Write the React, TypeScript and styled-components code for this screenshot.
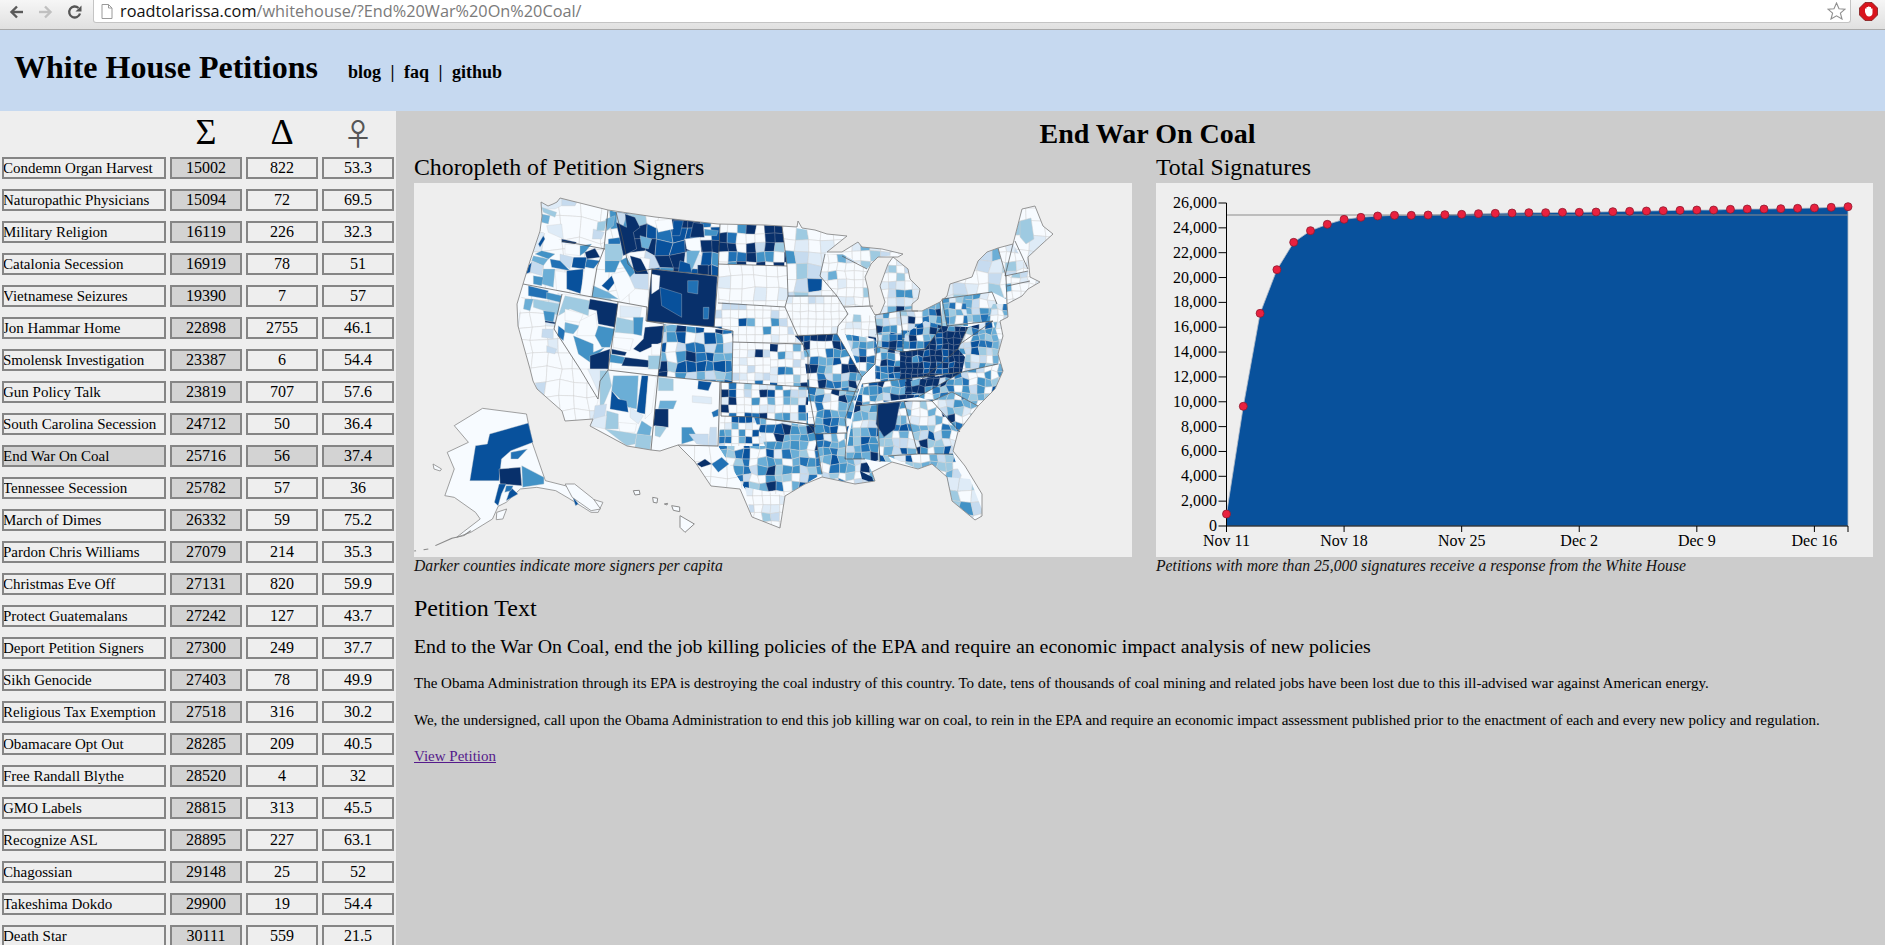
import React from "react";
import styled, { createGlobalStyle } from "styled-components";

const SERIF = `"Liberation Serif", "Times New Roman", serif`;

const Global = createGlobalStyle`
  html, body { margin: 0; padding: 0; height: 100%; overflow: hidden; background: #ccc; }
  body { font-family: ${SERIF}; color: #000; }
`;

const Page = styled.div`
  width: 1885px; height: 945px; overflow: hidden;
  display: flex; flex-direction: column;
`;

/* ---------- browser chrome ---------- */
const Chrome = styled.div`
  height: 29px; flex: none; display: flex; align-items: flex-start;
  background: linear-gradient(#f6f6f6, #e0e0e0);
  border-bottom: 1px solid #a9a9a9;
`;
const NavIcons = styled.div`
  width: 93px; height: 24px; flex: none; display: flex; align-items: center;
  gap: 14px; padding-left: 9px; box-sizing: border-box;
`;
const AddressBox = styled.div`
  width: 1758px; height: 23px; flex: none; box-sizing: border-box;
  background: #fff; border: 1px solid #c4c4c4; border-top: 0;
  border-radius: 0 0 3px 3px; display: flex; align-items: center;
  padding-left: 7px; gap: 7px; position: relative;
  font: 16.3px "Open Sans", "Noto Sans", sans-serif; color: #7a7a7a;
`;
const Host = styled.span` color: #111; `;
const StarSlot = styled.div`
  margin-left: auto; margin-right: 4px; display: flex; align-items: center;
`;
const Extension = styled.div`
  flex: 1; height: 23px; display: flex; align-items: center; justify-content: center;
`;

/* ---------- site header ---------- */
const SiteHeader = styled.header`
  height: 81px; flex: none; background: #c6d9f0;
  display: flex; align-items: baseline; padding: 18px 0 0 14px; box-sizing: border-box;
`;
const SiteTitle = styled.h1`
  margin: 0; font: bold 32px/38px ${SERIF};
`;
const SiteNav = styled.nav`
  margin-left: 30px; font: bold 18px/20px ${SERIF}; word-spacing: 5px;
`;

/* ---------- body ---------- */
const Body = styled.div`
  flex: 1; min-height: 0; display: flex;
`;
const Sidebar = styled.aside`
  width: 396px; flex: none; background: #eee; padding-left: 2px; box-sizing: border-box;
`;
const ColumnHead = styled.div`
  height: 46px; display: grid; grid-template-columns: 164px 72px 72px 72px; column-gap: 4px;
`;
const HeadGlyph = styled.div<{ $size: number; $font: string; $ink: string }>`
  text-align: center; font-size: ${(p) => p.$size}px; line-height: 42px;
  font-family: ${(p) => p.$font}; color: ${(p) => p.$ink};
`;
const Row = styled.div`
  display: grid; grid-template-columns: 164px 72px 72px 72px; column-gap: 4px;
  height: 22px; margin-bottom: 10px;
`;
const Cell = styled.div<{ $shade?: boolean; $name?: boolean }>`
  box-sizing: border-box; height: 22px; border: 2px solid #858585;
  background: ${(p) => (p.$shade ? "#d3d3d3" : "#eee")};
  font-size: ${(p) => (p.$name ? "15px" : "16px")}; line-height: 18px;
  white-space: nowrap; overflow: hidden;
  text-align: ${(p) => (p.$name ? "left" : "center")};
  text-indent: ${(p) => (p.$name ? "-1px" : "0")};
`;

const Main = styled.main`
  flex: 1; min-width: 0; background: #ccc; padding: 0 12px 0 18px; box-sizing: border-box;
`;
const PetitionTitle = styled.h2`
  margin: 0; height: 40px; font: bold 28px/46px ${SERIF}; text-align: center;
  padding-left: 8px;
`;
const Panels = styled.div`
  display: grid; grid-template-columns: 718px 717px; column-gap: 24px;
`;
const PanelTitle = styled.h3`
  margin: 0; height: 32px; font: normal 23.8px/33px ${SERIF};
`;
const PanelBox = styled.div`
  height: 374px; background: #eee;
`;
const Drawing = styled.svg`
  display: block; width: 717px; height: 374px;
`;
const Caption = styled.div`
  font: italic 15.7px/17px ${SERIF}; height: 17px; color: #111;
`;
const SectionTitle = styled.h3`
  margin: 19px 0 0; font: normal 24px/30px ${SERIF};
`;
const Lead = styled.p`
  margin: 11px 0 3px; font: normal 19.85px/24px ${SERIF};
`;
const BodyText = styled.p`
  margin: 15px 0 0; font: normal 15px/21.5px ${SERIF}; white-space: nowrap;
`;
const PetitionLink = styled.a`
  display: block; margin-top: 15px; font: normal 15px/21.5px ${SERIF};
  color: #551a8b; text-decoration: underline;
`;
const AxisLabel = styled.text<{ $anchor: string }>`
  font: 16px ${SERIF}; fill: #000; text-anchor: ${(p) => p.$anchor};
`;

/* ---------- data ---------- */
const PETITIONS: [string, number, number, number][] = [
  ["Condemn Organ Harvest", 15002, 822, 53.3],
  ["Naturopathic Physicians", 15094, 72, 69.5],
  ["Military Religion", 16119, 226, 32.3],
  ["Catalonia Secession", 16919, 78, 51],
  ["Vietnamese Seizures", 19390, 7, 57],
  ["Jon Hammar Home", 22898, 2755, 46.1],
  ["Smolensk Investigation", 23387, 6, 54.4],
  ["Gun Policy Talk", 23819, 707, 57.6],
  ["South Carolina Secession", 24712, 50, 36.4],
  ["End War On Coal", 25716, 56, 37.4],
  ["Tennessee Secession", 25782, 57, 36],
  ["March of Dimes", 26332, 59, 75.2],
  ["Pardon Chris Williams", 27079, 214, 35.3],
  ["Christmas Eve Off", 27131, 820, 59.9],
  ["Protect Guatemalans", 27242, 127, 43.7],
  ["Deport Petition Signers", 27300, 249, 37.7],
  ["Sikh Genocide", 27403, 78, 49.9],
  ["Religious Tax Exemption", 27518, 316, 30.2],
  ["Obamacare Opt Out", 28285, 209, 40.5],
  ["Free Randall Blythe", 28520, 4, 32],
  ["GMO Labels", 28815, 313, 45.5],
  ["Recognize ASL", 28895, 227, 63.1],
  ["Chagossian", 29148, 25, 52],
  ["Takeshima Dokdo", 29900, 19, 54.4],
  ["Death Star", 30111, 559, 21.5],
];

const C = ["#f7fbff", "#deebf7", "#c6dbef", "#9ecae1", "#6baed6", "#4292c6", "#2171b5", "#08519c", "#08306b"];
const DIST: Record<string, number[]> = {
  W: [90, 7, 2, 1, 0, 0, 0, 0, 0],
  A: [72, 12, 5, 3, 2, 2, 1, 1.5, 1.5],
  B: [42, 25, 14, 10, 5, 2, 1, 0.5, 0.5],
  P: [48, 5, 5, 6, 6, 6, 7, 8, 9],
  C: [20, 6, 9, 12, 16, 14, 11, 6, 6],
  H: [16, 7, 10, 15, 20, 15, 9, 5, 3],
  T: [18, 5, 8, 13, 15, 14, 12, 9, 6],
  D: [16, 3, 5, 8, 12, 14, 15, 14, 13],
  G: [30, 2, 2, 3, 4, 5, 8, 14, 32],
  K: [6, 1, 2, 4, 7, 10, 14, 22, 34],
  E: [0, 0, 0, 0, 0, 1, 2, 12, 85],
  L: [22, 24, 24, 15, 9, 3, 2, 1, 0],
};

type Zone = [string, number, string, number];
/* polygon in page coordinates, county size, colour mix, jitter */
const ZONES: Zone[] = [
  ["541,203 560,199 608,211 604,250 562,242 540,232", 21, "W", 0.2],
  ["540,232 562,242 605,250 597,268 592,298 523,285", 20, "W", 0.2],
  ["608,211 616,213 622,237 628,265 637,273 652,270 647,308 592,298 597,268 604,250", 20, "A", 0.2],
  ["616,213 720,225 718,277 652,270 637,273 628,265 622,237", 14, "G", 0.24],
  ["720,225 782,227 787,267 718,265", 11, "G", 0.12],
  ["718,265 787,267 788,297 785,308 718,304", 12, "W", 0.1],
  ["523,285 562,295 554,330 580,370 598,400 593,420 565,422 537,390 518,327", 14, "W", 0.2],
  ["664,325 733,332 732,384 658,377", 11, "D", 0.2],
  ["717,303 785,308 805,345 733,343 733,332 714,328", 9.5, "A", 0.05],
  ["733,343 803,345 808,388 732,384", 9, "A", 0.05],
  ["770,345 803,345 808,388 770,386", 9, "P", 0.06],
  ["721,383 808,388 815,428 754,418 721,417", 9, "P", 0.06],
  ["721,417 754,418 765,447 718,447", 8, "P", 0.06],
  ["754,418 815,428 822,475 805,485 785,497 745,490 718,447 765,447", 9.5, "T", 0.2],
  ["678,447 718,447 745,490 711,487 695,463", 16, "W", 0.1],
  ["745,488 785,497 780,529 751,518", 10, "A", 0.12],
  ["782,227 847,237 825,255 820,277 837,297 788,298 787,267", 13, "B", 0.14],
  ["825,255 842,255 870,270 870,307 844,308 837,297 820,277", 10, "A", 0.1],
  ["842,253 858,243 903,255 878,258 867,270", 11, "B", 0.12],
  ["880,315 885,303 880,287 888,265 893,258 908,270 910,280 920,290 918,300 912,312 900,312", 9.5, "B", 0.08],
  ["788,298 837,297 848,315 838,327 837,335 795,337 785,308", 9, "W", 0.05],
  ["795,337 837,335 862,378 858,393 808,388 803,345", 9, "D", 0.18],
  ["838,327 848,315 875,317 878,340 875,345 845,335", 9, "A", 0.1],
  ["845,335 875,340 878,350 875,365 862,378", 8.5, "D", 0.14],
  ["875,316 900,312 903,337 903,353 878,348", 8.5, "C", 0.12],
  ["875,335 903,335 903,353 878,348", 8.5, "D", 0.12],
  ["900,312 940,303 942,327 925,350 903,353", 8.5, "C", 0.14],
  ["905,335 925,322 942,327 925,350 903,353", 8, "D", 0.14],
  ["942,300 992,293 997,305 993,322 947,327 942,327", 9, "C", 0.18],
  ["942,300 965,297 968,327 947,327", 8, "D", 0.18],
  ["947,297 950,285 972,278 978,262 987,253 998,249 1006,277 1006,300 992,293 942,300", 12, "B", 0.2],
  ["998,249 1013,245 1028,258 1028,272 1005,277", 10, "B", 0.2],
  ["1005,277 1040,270 1040,300 1007,305", 9, "A", 0.2],
  ["1013,245 1022,210 1035,207 1043,227 1053,235 1042,245 1028,270", 15, "W", 0.2],
  ["993,305 1007,305 1012,330 1005,345 995,345 985,325", 7, "B", 0.2],
  ["958,350 968,328 993,322 1000,345 1005,372 962,373", 8, "H", 0.24],
  ["875,348 905,352 905,380 875,385", 7.5, "K", 0.2],
  ["900,353 925,350 942,327 968,328 958,350 965,358 962,373 900,382", 7, "E", 0.2],
  ["862,385 962,373 932,398 918,398 855,407", 8.5, "D", 0.24],
  ["905,383 962,373 935,395 905,395", 8, "K", 0.24],
  ["918,398 962,373 998,365 1003,372 995,390 978,407 952,393 932,402", 8.5, "H", 0.22],
  ["932,402 952,393 978,407 958,433", 9, "C", 0.24],
  ["904,402 932,402 958,433 953,455 918,455", 9, "C", 0.25],
  ["877,405 904,402 918,455 888,457 892,463 880,463", 9, "C", 0.2],
  ["855,407 877,405 880,463 865,460 845,460", 9.5, "C", 0.22],
  ["808,388 858,393 847,434 815,435 808,425", 9, "C", 0.22],
  ["815,435 847,434 845,460 865,460 872,473 875,482 855,485 822,478", 9, "H", 0.24],
  ["888,457 953,455 958,470 975,500 950,490 932,465 918,470", 9.5, "H", 0.25],
  ["947,478 970,480 985,518 975,521 952,502", 12, "L", 0.25],
];

/* large county shapes that the grid cannot show */
type Patch = [number, string];
const PATCH_A: Patch[] = [
  [1, "108,40 170,28 215,40 210,50 170,50 150,60 110,60"],
  [4, "110,75 135,80 130,105 110,100"], [3, "110,55 155,70 150,85 115,70"],
  [1, "125,110 170,105 175,150 130,130"], [2, "170,30 215,40 210,50 170,50"],
  [2, "265,120 298,130 290,150 262,150"], [3, "278,100 305,95 298,125 275,125"],
  [8, "170,150 215,160 210,165 170,160"], [7, "100,165 115,140 120,150 105,175"],
  [0, "180,165 225,168 225,200 180,195"], [5, "225,170 260,165 240,190 225,200"],
  [8, "240,190 270,178 285,205 245,210"], [7, "205,205 245,205 240,240 200,235"],
  [6, "245,210 285,215 265,240 240,235"], [2, "165,195 205,205 195,240 165,220"],
  [6, "135,210 165,215 195,245 140,235"], [4, "85,200 130,210 115,230 80,215"],
  [5, "110,185 150,195 130,210 90,195"], [2, "80,215 115,230 110,260 75,250"],
  [7, "60,240 80,220 75,250 62,255"], [4, "115,240 150,240 145,295 110,285"],
  [5, "85,260 115,265 110,290 85,285"], [0, "150,245 185,250 195,310 155,305"],
  [7, "185,245 235,240 230,315 185,300"], [0, "240,235 275,240 255,325 225,320"],
  [6, "70,290 130,305 125,330 70,320"], [5, "125,310 170,320 165,340 125,330"],
  [3, "85,330 165,345 165,380 85,355"], [4, "60,330 85,330 75,365 55,360"],
  [5, "115,365 150,370 145,400 120,395"], [8, "120,395 150,400 150,405 120,400"],
  [2, "112,420 145,420 145,450 110,445"], [2, "125,470 155,480 150,495 125,490"],
  [3, "300,165 360,165 350,215 300,215"], [5, "300,215 345,215 330,250 300,250"],
  [7, "290,290 320,260 330,280 310,305"], [4, "265,290 310,310 340,330 260,325"],
  [0, "320,255 365,245 390,300 345,340"], [5, "345,215 365,205 390,250 375,265"],
  [8, "375,200 410,210 430,255 390,255"], [0, "405,205 435,210 430,250"],
  [6, "310,150 350,145 345,165 310,165"], [4, "302,90 330,80 325,110 305,125"],
  [2, "335,70 365,75 355,110 335,100"], [8, "333,100 365,115 360,75 390,85 405,115 385,130 395,180 355,200 340,130"],
  [7, "505,95 535,95 525,140 500,140"], [8, "565,100 595,105 598,145 555,145"],
  [5, "598,120 640,125 635,140 598,140"], [0, "540,150 585,145 590,200 545,180"],
  [4, "545,185 585,185 560,245 545,225"], [7, "525,215 555,225 560,250 520,250"],
  [8, "578,228 610,228 610,258 578,255"], [0, "450,95 500,90 505,120 460,130"],
  [4, "405,140 440,150 430,180 410,175"],
  /* Wyoming */
  [8, "440,240 637,262 628,415 425,397"],
  [7, "465,295 530,315 530,385 470,350"], [6, "548,275 580,275 578,315 548,310"],
  [6, "595,355 612,355 610,390 595,390"], [0, "440,255 465,260 462,300 440,315"],
  /* Nevada */
  [0, "172,315 260,325 340,340 310,540 225,540 148,420"],
  [3, "180,320 255,335 250,380 195,360 160,380"], [0, "180,360 235,375 225,400 180,395"],
  [4, "180,400 225,410 205,435 178,430"], [6, "160,410 180,425 175,455 158,440"],
  [8, "255,330 340,345 330,415 280,405 275,365 250,360"],
  [0, "225,395 272,372 280,440 215,440"], [5, "280,410 330,420 315,475 290,475 270,440"],
  [5, "205,440 265,465 265,490 300,475 255,520 220,495"], [8, "255,500 315,480 310,540 255,540"],
  /* Utah */
  [0, "340,340 425,355 423,397 478,405 463,540 318,540"],
  [1, "345,350 410,355 405,385 345,385"], [3, "335,385 385,395 385,435 330,430"],
  [0, "325,445 385,450 375,485 325,475"], [8, "320,480 365,490 360,500 320,495"],
  [5, "315,495 360,505 355,525 315,520"], [8, "360,505 440,515 430,535 350,530"],
  [3, "430,500 470,500 465,540 430,540"], [8, "420,415 475,410 470,460 405,490 385,480 415,450"],
  [0, "440,465 470,465 468,498 440,498"], [5, "385,385 415,385 410,440 385,435"],
];
const PATCH_B: Patch[] = [
  /* Arizona */
  [0, "285,35 310,2 460,22 438,243 365,230 255,170 265,150 280,90"],
  [1, "248,0 305,0 285,35 280,70"], [3, "285,5 310,5 320,50 295,110 285,110"],
  [4, "325,20 400,20 395,120 370,115 320,65"], [7, "410,20 430,20 420,135 395,130"],
  [0, "430,20 455,25 440,130 420,150"], [7, "320,65 340,90 365,95 370,130 315,120"],
  [1, "375,115 415,140 400,165 375,145"], [4, "410,155 440,175 435,200 395,195"],
  [0, "340,160 395,165 390,190 345,190"], [3, "305,125 340,135 340,180 300,180"],
  [1, "255,170 265,140 305,140 300,180"], [2, "270,110 305,105 300,140 265,150"],
  [3, "300,180 395,195 390,225 365,230"], [3, "395,195 440,200 435,243 390,235"],
  /* New Mexico */
  [0, "460,22 645,38 642,232 520,228 465,247 438,243"],
  [3, "460,25 505,30 505,65 460,65"], [7, "580,35 620,40 610,65 578,60"],
  [4, "465,95 515,95 505,120 460,120"], [8, "450,120 490,120 490,175 445,170"],
  [3, "450,170 485,175 465,205 450,200"], [5, "530,175 560,175 580,210 530,225"],
  [2, "552,195 610,195 610,230 575,225"], [2, "615,175 635,175 635,230 610,230"],
  [6, "620,130 640,120 640,140 625,145"], [1, "562,80 620,85 620,105 562,100"],
  /* Texas west */
  [8, "575,285 600,270 620,285 590,295"], [6, "620,285 650,265 672,285 640,310"],
];
const PATCH_AK: Patch[] = [
  [7, "190,795 272,762 282,820 235,845 215,870 210,935 148,935 160,830 185,825"],
  [6, "235,850 270,840 250,870 235,870"], [8, "210,900 255,895 258,950 212,945"],
  [5, "258,890 305,925 305,945 260,955"], [7, "210,945 225,945 215,975 208,1010 200,1000"],
  [7, "235,955 250,975 225,995"], [6, "225,950 240,950 235,965 222,970"],
  [7, "365,980 378,1005 372,1010"], [7, "410,1005 420,1010 415,1020"],
];
const ALASKA =
  "175,718 268,735 280,820 308,935 350,950 395,985 430,1000 420,1030 405,1030 360,990 330,965 290,955 255,960 225,1000 208,1012 196,1050 150,1090 120,1105 135,1088 170,1050 160,1030 115,985 95,980 115,900 100,850 145,820 115,770";
const ISLANDS = [
  "385,365 403,364 405,376 390,378", "443,385 458,388 456,402 445,400",
  "478,405 488,403 486,408", "500,410 524,414 524,428 505,424",
  "525,440 568,465 540,490 525,475",
];

const OUTLINE =
  "541,203 548,207 553,205 557,203 560,199 608,211 655,218 718,225 765,226 797,228 798,222 802,229 815,231 827,235 847,237 827,253 842,253 858,243 862,248 882,250 903,255 898,258 878,258 871,265 865,278 868,290 870,307 875,316 880,315 885,303 880,287 888,265 893,258 908,270 910,280 920,290 918,300 912,305 912,312 922,312 940,303 947,297 950,285 972,278 978,262 987,253 998,249 1013,245 1022,210 1035,207 1043,227 1053,235 1042,245 1028,258 1030,278 1040,283 1028,290 1022,297 1007,305 1008,318 1000,322 1003,337 998,355 1003,372 995,390 978,407 958,433 953,452 965,467 982,495 982,517 975,521 952,502 947,478 932,465 918,470 892,463 872,473 875,482 855,485 822,478 805,485 785,497 780,529 752,518 740,490 711,487 695,463 678,446 660,452 651,451 627,447 590,427 593,420 565,422 562,412 537,390 533,382 530,370 518,327 517,305 523,285 530,262 540,232 542,217";

const STATE_LINES = [
  "562,242 605,250", "608,211 604,250 597,268 592,298", "523,285 592,298 647,308", "616,213 622,237 628,265 637,273 652,270",
  "652,270 718,277 714,328 647,322 652,270", "647,308 646,322 664,325 658,377", "618,303 608,371 658,377 732,384",
  "562,295 554,330 580,370 598,400 600,382 608,371", "658,377 651,451", "720,225 718,277", "718,265 787,267",
  "782,227 787,267 788,297 785,308 797,335 808,355 808,388", "718,304 785,308", "714,328 733,332 732,384", "733,343 803,345",
  "720,383 718,447", "678,446 718,447", "721,383 808,388", "721,383 721,417 754,418 808,425 815,428 808,388",
  "788,297 837,297", "795,337 837,335", "825,255 820,277 837,297 848,315 838,327 837,335 862,378 855,393 845,420 847,434 845,460 865,460",
  "844,308 873,307", "842,257 867,270", "875,317 878,340 875,365 862,378", "875,316 900,312 918,312", "900,312 903,337 903,353",
  "878,348 903,353 925,350 942,327 940,303", "942,300 992,293 997,305", "947,327 993,322", "942,300 947,327",
  "998,249 1006,277 1007,305", "1013,245 1005,277", "1005,277 1028,272", "1007,287 1030,282", "1015,242 1028,270",
  "862,385 962,373 998,365", "922,380 958,350 968,328", "855,407 877,405 904,402 932,402 952,393 978,407", "918,398 962,373",
  "877,405 880,463", "904,402 918,455 953,455", "888,457 918,455", "932,402 960,433", "815,435 847,434", "808,425 815,435 822,475",
  "808,388 858,393", "765,420 808,425", "960,345 993,322",
];

function rng(seed: number) {
  let s = seed;
  return () => {
    s = (s + 0x6d2b79f5) | 0;
    let t = Math.imul(s ^ (s >>> 15), 1 | s);
    t = (t + Math.imul(t ^ (t >>> 7), 61 | t)) ^ t;
    return ((t ^ (t >>> 14)) >>> 0) / 4294967296;
  };
}
function pick(r: () => number, key: string) {
  const d = DIST[key];
  const total = d.reduce((a, b) => a + b, 0);
  let v = r() * total;
  for (let i = 0; i < d.length; i++) {
    v -= d[i];
    if (v <= 0) return i;
  }
  return 0;
}
function buildCells() {
  const r = rng(20121218);
  return ZONES.map(([poly, raw, key, jit]) => {
    const size = raw <= 11 ? raw * 0.86 : raw;
    const pts = poly.split(" ").map((p) => p.split(",").map(Number));
    const xs = pts.map((p) => p[0]);
    const ys = pts.map((p) => p[1]);
    const x0 = Math.min(...xs) - size;
    const y0 = Math.min(...ys) - size;
    const nx = Math.ceil((Math.max(...xs) - x0) / size) + 2;
    const ny = Math.ceil((Math.max(...ys) - y0) / size) + 2;
    const v: number[][][] = [];
    for (let j = 0; j < ny; j++) {
      v.push([]);
      for (let i = 0; i < nx; i++) {
        v[j].push([
          x0 + i * size + (r() - 0.5) * 2 * jit * size,
          y0 + j * size + (r() - 0.5) * 2 * jit * size,
        ]);
      }
    }
    const cells: { d: string; c: number }[] = [];
    for (let j = 0; j < ny - 1; j++) {
      for (let i = 0; i < nx - 1; i++) {
        const q = [v[j][i], v[j][i + 1], v[j + 1][i + 1], v[j + 1][i]];
        cells.push({ d: q.map((p) => `${p[0].toFixed(1)},${p[1].toFixed(1)}`).join(" "), c: pick(r, key) });
      }
    }
    return { poly, cells };
  });
}
const CELLS = buildCells();

function patches(list: Patch[]) {
  return list.map(([c, pts], i) => (
    <polygon key={i} points={pts} fill={C[c]} stroke="#cfcfcf" strokeWidth={1} />
  ));
}

function CountyMap() {
  return (
    <Drawing viewBox="414 184 717 374">
      <defs>
        <clipPath id="us"><polygon points={OUTLINE} /></clipPath>
        {CELLS.map((z, i) => (
          <clipPath id={`z${i}`} key={i}><polygon points={z.poly} /></clipPath>
        ))}
      </defs>
      <polygon points={OUTLINE} fill={C[0]} />
      <g clipPath="url(#us)">
        {CELLS.map((z, i) => (
          <g clipPath={`url(#z${i})`} key={i}>
            {z.cells.map((cell, k) => (
              <polygon key={k} points={cell.d} fill={C[cell.c]} stroke={cell.c === 8 ? "#5f708f" : "#cfcfcf"} strokeWidth={0.45} />
            ))}
          </g>
        ))}
        <g transform="translate(505 190) scale(.33333)">{patches(PATCH_A)}</g>
        <g transform="translate(505 370) scale(.33333)">{patches(PATCH_B)}</g>
        <polygon points="1020,222 1031,219 1034,240 1026,245 1020,238" fill={C[3]} stroke="#cfcfcf" strokeWidth={0.5} />
        <polygon points="878,405 900,403 895,430 884,438 876,425" fill={C[8]} stroke="#7b8aa3" strokeWidth={0.5} />
        <polygon points="860,472 872,478 874,484 862,480" fill={C[8]} />
      </g>
      <g fill="none" stroke="#555" strokeWidth={0.7}>
        {STATE_LINES.map((s, i) => <polyline key={i} points={s} />)}
      </g>
      <polygon points={OUTLINE} fill="none" stroke="#8a8a8a" strokeWidth={0.9} />
      <g transform="translate(400 170) scale(.4719 .33333)">
        <polygon points={ALASKA} fill={C[0]} stroke="#8a8a8a" strokeWidth={2} />
        {patches(PATCH_AK)}
        <polygon points="70,885 88,900 85,906 72,900" fill="#f7fbff" stroke="#8a8a8a" strokeWidth={2} />
        <polygon points="205,1030 226,1020 218,1050 204,1052" fill="#f7fbff" stroke="#8a8a8a" strokeWidth={2} />
        <polygon points="350,945 370,945 410,990 425,1020 405,1025 365,985" fill="#f7fbff" stroke="#8a8a8a" strokeWidth={2} />
        <polyline points="75,1130 110,1108 135,1100 150,1085" fill="none" stroke="#8a8a8a" strokeWidth={3} />
        <polyline points="30,1146 34,1145" fill="none" stroke="#8a8a8a" strokeWidth={3} />
        <polyline points="50,1142 60,1140" fill="none" stroke="#8a8a8a" strokeWidth={3} />
      </g>
      <g transform="translate(505 370) scale(.33333)">
        {ISLANDS.map((s, i) => <polygon key={i} points={s} fill={C[0]} stroke="#8a8a8a" strokeWidth={3} />)}
      </g>
    </Drawing>
  );
}

/* ---------- signature chart ---------- */
const ZY = [1182, 859, 580, 449, 367, 332, 313, 298, 292, 288, 286, 286, 285, 284, 283, 281, 280, 279, 278, 278, 277, 277, 276, 275, 274, 273, 272, 271, 270, 270, 268, 267, 267, 266, 265, 264, 262, 260];
const X0 = 1226.5;
const STEP = (1848 - 1226.5) / 37;
const Y0 = 526;
const Y_TOP = 203;
const POINTS = ZY.map((z, i) => [X0 + i * STEP, 120 + z / 3]);
const TICKS_Y = Array.from({ length: 14 }, (_, i) => i * 2000);
const TICKS_X: [string, number][] = [["Nov 11", 0], ["Nov 18", 7], ["Nov 25", 14], ["Dec 2", 21], ["Dec 9", 28], ["Dec 16", 35]];

function SignatureChart() {
  const line = POINTS.map((p) => p.join(",")).join(" ");
  return (
    <Drawing viewBox="1156 183 717 374">
      <polygon points={`${X0},${Y0} ${line} 1848,${Y0}`} fill="#08519c" stroke="#b5bdc8" strokeWidth={0.8} />
      <line x1={X0} x2={1848} y1={215} y2={215} stroke="#8c8c8c" strokeWidth={1} />
      <g stroke="#000" strokeWidth={1} fill="none">
        <line x1={X0} x2={X0} y1={Y_TOP} y2={Y0} />
        <line x1={X0} x2={1848} y1={Y0} y2={Y0} strokeWidth={1.2} />
        {TICKS_Y.map((t) => {
          const y = Y0 - (t / 26000) * (Y0 - Y_TOP);
          return <line key={t} x1={X0 - 8} x2={X0} y1={y} y2={y} />;
        })}
        {TICKS_X.map(([n, d]) => <line key={n} x1={X0 + d * STEP} x2={X0 + d * STEP} y1={Y0} y2={Y0 + 6} />)}
        <line x1={1848} x2={1848} y1={Y0} y2={Y0 + 6} />
      </g>
      {TICKS_Y.map((t) => (
        <AxisLabel key={t} $anchor="end" x={1217} y={Y0 - (t / 26000) * (Y0 - Y_TOP) + 5}>
          {t.toLocaleString("en-US")}
        </AxisLabel>
      ))}
      {TICKS_X.map(([n, d]) => (
        <AxisLabel key={n} $anchor="middle" x={X0 + d * STEP} y={546}>{n}</AxisLabel>
      ))}
      {POINTS.map((p, i) => (
        <circle key={i} cx={p[0]} cy={p[1]} r={4} fill="#e8213f" stroke="#8e1b30" strokeWidth={0.8} />
      ))}
    </Drawing>
  );
}

/* ---------- chrome icons ---------- */
const ArrowIcon = ({ dir, color }: { dir: number; color: string }) => (
  <svg width="15" height="14" viewBox="0 0 15 14" fill="none">
    <g transform={dir < 0 ? "" : "matrix(-1 0 0 1 15 0)"} stroke={color} strokeWidth="2.4">
      <path d="M14 7H3" />
      <path d="M8 1.5L2.5 7L8 12.5" />
    </g>
  </svg>
);
const ReloadIcon = () => (
  <svg width="16" height="16" viewBox="0 0 16 16" fill="none">
    <path d="M13 9.5A5.5 5.5 0 1 1 11.5 4" stroke="#555" strokeWidth="2.3" />
    <path d="M14.5 1.5V7.5H8.5Z" fill="#555" />
  </svg>
);
const PageIcon = () => (
  <svg width="12" height="15" viewBox="0 0 12 15" fill="#fff" stroke="#9a9a9a">
    <path d="M1 .5H7.5L11 4V14.5H1Z" />
    <path d="M7.5 .5V4H11" fill="none" />
  </svg>
);
const StarIcon = () => (
  <svg width="19" height="18" viewBox="0 0 19 18">
    <path d="M9.5 1L12 6.8L18 7.2L13.4 11.1L15 17L9.5 13.8L4 17L5.6 11.1L1 7.2L7 6.8Z" fill="#fff" stroke="#8f8f8f" strokeWidth="1.1" />
  </svg>
);
const BlockerIcon = () => (
  <svg width="19" height="19" viewBox="0 0 19 19">
    <path d="M6 .5H13L18.500 6V13L13 18.500H6L.5 13V6Z" fill="#d8141d" stroke="#7c1b1b" strokeWidth=".8" />
    <path d="M6 10V6.500H7.500V5H9V4.500H10.500V5H12V6.500H13.500V11C13.500 13 12 14.500 10 14.500C8 14.500 7 13 6 10Z" fill="#fff" />
  </svg>
);

const GLYPH_FONT = `"Noto Sans CJK JP", "DejaVu Sans", sans-serif`;

export default function App() {
  return (
    <Page>
      <Global />
      <Chrome>
        <NavIcons>
          <ArrowIcon dir={-1} color="#5a5a5a" />
          <ArrowIcon dir={1} color="#c0c0c0" />
          <ReloadIcon />
        </NavIcons>
        <AddressBox>
          <PageIcon />
          <span><Host>roadtolarissa.com</Host>/whitehouse/?End%20War%20On%20Coal/</span>
          <StarSlot><StarIcon /></StarSlot>
        </AddressBox>
        <Extension><BlockerIcon /></Extension>
      </Chrome>
      <SiteHeader>
        <SiteTitle>White House Petitions</SiteTitle>
        <SiteNav>blog | faq | github</SiteNav>
      </SiteHeader>
      <Body>
        <Sidebar>
          <ColumnHead>
            <div />
            <HeadGlyph $size={36} $font={SERIF} $ink="#000">Σ</HeadGlyph>
            <HeadGlyph $size={36} $font={SERIF} $ink="#000">Δ</HeadGlyph>
            <HeadGlyph $size={30} $font={GLYPH_FONT} $ink="#555">♀</HeadGlyph>
          </ColumnHead>
          {PETITIONS.map(([name, total, delta, pct]) => {
            const on = name === "End War On Coal";
            return (
              <Row key={name}>
                <Cell $name $shade={on}>{name}</Cell>
                <Cell $shade>{total}</Cell>
                <Cell $shade={on}>{delta}</Cell>
                <Cell $shade={on}>{pct}</Cell>
              </Row>
            );
          })}
        </Sidebar>
        <Main>
          <PetitionTitle>End War On Coal</PetitionTitle>
          <Panels>
            <div>
              <PanelTitle>Choropleth of Petition Signers</PanelTitle>
              <PanelBox><CountyMap /></PanelBox>
              <Caption>Darker counties indicate more signers per capita</Caption>
            </div>
            <div>
              <PanelTitle>Total Signatures</PanelTitle>
              <PanelBox><SignatureChart /></PanelBox>
              <Caption>Petitions with more than 25,000 signatures receive a response from the White House</Caption>
            </div>
          </Panels>
          <SectionTitle>Petition Text</SectionTitle>
          <Lead>End to the War On Coal, end the job killing policies of the EPA and require an economic impact analysis of new policies</Lead>
          <BodyText>The Obama Administration through its EPA is destroying the coal industry of this country. To date, tens of thousands of coal mining and related jobs have been lost due to this ill-advised war against American energy.</BodyText>
          <BodyText>We, the undersigned, call upon the Obama Administration to end this job killing war on coal, to rein in the EPA and require an economic impact assessment published prior to the enactment of each and every new policy and regulation.</BodyText>
          <PetitionLink href="#">View Petition</PetitionLink>
        </Main>
      </Body>
    </Page>
  );
}
